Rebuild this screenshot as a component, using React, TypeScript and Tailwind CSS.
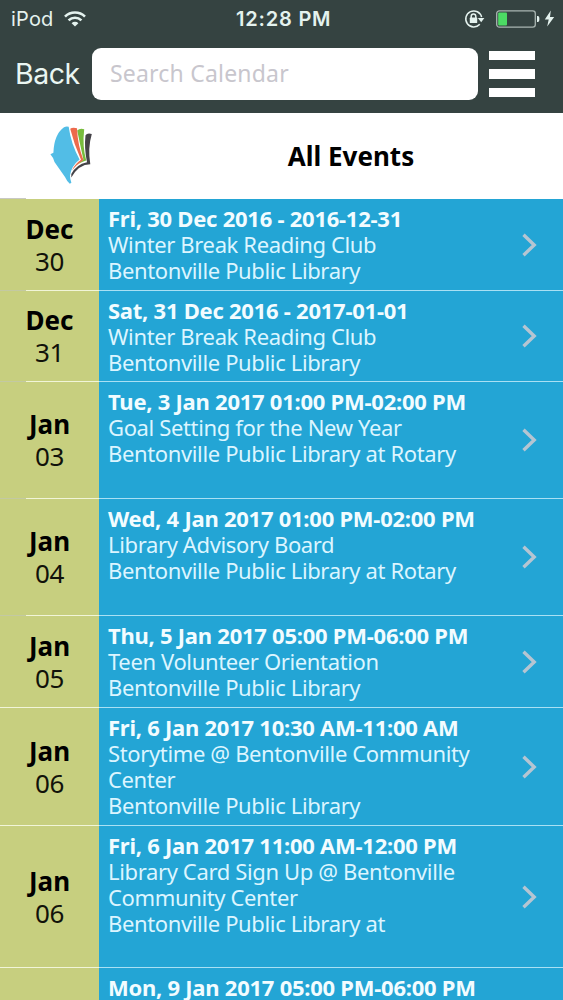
import React from 'react';

type Event = {
  month: string;
  day: string;
  when: string;
  lines: string[];
  height: string;
  inset?: boolean;
};

const events: Event[] = [
  { month: 'Dec', day: '30', when: 'Fri, 30 Dec 2016 - 2016-12-31', lines: ['Winter Break Reading Club', 'Bentonville Public Library'], height: 'h-[92px]', inset: true },
  { month: 'Dec', day: '31', when: 'Sat, 31 Dec 2016 - 2017-01-01', lines: ['Winter Break Reading Club', 'Bentonville Public Library'], height: 'h-[91px]', inset: true },
  { month: 'Jan', day: '03', when: 'Tue, 3 Jan 2017 01:00 PM-02:00 PM', lines: ['Goal Setting for the New Year', 'Bentonville Public Library at Rotary'], height: 'h-[117px]', inset: true },
  { month: 'Jan', day: '04', when: 'Wed, 4 Jan 2017 01:00 PM-02:00 PM', lines: ['Library Advisory Board', 'Bentonville Public Library at Rotary'], height: 'h-[117px]', inset: true },
  { month: 'Jan', day: '05', when: 'Thu, 5 Jan 2017 05:00 PM-06:00 PM', lines: ['Teen Volunteer Orientation', 'Bentonville Public Library'], height: 'h-[92px]' },
  { month: 'Jan', day: '06', when: 'Fri, 6 Jan 2017 10:30 AM-11:00 AM', lines: ['Storytime @ Bentonville Community', 'Center', 'Bentonville Public Library'], height: 'h-[118px]' },
  { month: 'Jan', day: '06', when: 'Fri, 6 Jan 2017 11:00 AM-12:00 PM', lines: ['Library Card Sign Up @ Bentonville', 'Community Center', 'Bentonville Public Library at'], height: 'h-[142px]' },
  { month: '', day: '', when: 'Mon, 9 Jan 2017 05:00 PM-06:00 PM', lines: [], height: 'h-[92px]' },
];

const StatusBar = () => (
  <div className="flex h-[37px] items-center font-['Inter'] text-[#e4f2ee]">
    <div className="flex w-[236px] items-center gap-[10px] pl-[11px]">
      <span className="text-[20px] leading-none tracking-[0.2px]">iPod</span>
      <svg width="22" height="16" viewBox="0 0 22 16" fill="none" stroke="currentColor" strokeWidth="2.6">
        <path d="M1 5.6a14.2 14.2 0 0 1 20 0" />
        <path d="M4.6 9.4a9 9 0 0 1 12.8 0" />
        <path d="M11 15.6L7.6 12.2a4.8 4.8 0 0 1 6.8 0z" fill="currentColor" stroke="none" />
      </svg>
    </div>
    <div className="whitespace-nowrap text-[20px] font-semibold leading-none tracking-[0.8px]">12:28 PM</div>
    <div className="flex flex-1 items-center justify-end pr-[8px]">
      <svg width="21" height="20" viewBox="0 0 21 20" fill="none" stroke="currentColor" strokeWidth="1.5">
        <path d="M15.8 15.2A8 8 0 1 1 17.6 8.2" />
        <path d="M13.8 9h6.6l-3.2 4.2z" fill="currentColor" stroke="none" />
        <path d="M7.2 9V7.4a2.3 2.3 0 0 1 4.6 0V9" />
        <rect x="5.8" y="8.6" width="7.4" height="5.4" rx=".6" fill="currentColor" stroke="none" />
      </svg>
      <svg className="ml-[11px]" width="44" height="18" viewBox="0 0 44 18">
        <rect x=".7" y=".9" width="38.6" height="16.2" rx="2.6" fill="none" stroke="#a9b5b1" strokeWidth="1.3" />
        <rect x="2.2" y="2.4" width="8.8" height="13.2" rx="1" fill="#4cdb64" />
        <path d="M41 6h.8q1.6 0 1.6 3t-1.6 3H41z" fill="currentColor" />
      </svg>
      <svg className="ml-[4px]" width="11" height="17" viewBox="0 0 11 17" fill="currentColor">
        <path d="M6.8.5L.8 9.4h3.9L3.2 16.5l7-9.6H6z" />
      </svg>
    </div>
  </div>
);

const Logo = () => (
  <svg width="42" height="60" viewBox="0 0 42 60">
    <path d="M35.5 9.2Q37.4 6.6 41.8 8Q37.6 22 40.3 38.3Q28.8 38.4 21.3 51.5V48Q26 38.5 37 36.2Q34 22 35.5 9.2z" fill="#454348" />
    <path d="M27.2 4.6Q29.6 2 34.2 3.2Q32.2 20 36.2 34.6Q29 36.6 24 41.6Q29.5 36.5 33.4 33.6Q30.4 20 27.2 4.6z" fill="#78bc3d" />
    <path d="M20.2 2.8Q22.4 1 27 2.2Q27.7 19 33.4 34Q26.6 38.5 22 44.2Q25 38 31 33.8Q23.9 18 20.2 2.8z" fill="#ed6a4c" />
    <path d="M14 1.2Q16.6 -.2 18.7 .8Q21 18 29.6 33.6Q21.4 40 20 49.5Q20 53 21.4 56.8L19.8 57.8Q17 55.4 15 51L4.5 36Q3.8 32 .4 28.2L3.4 26.8Q4 8.4 14 1.2z" fill="#52bde6" />
  </svg>
);

const EventRow = ({ event }: { event: Event }) => (
  <div className={`relative flex shrink-0 ${event.height}`}>
    <div className="flex w-[99px] flex-col items-center justify-center border-b border-[#f1f5d8] bg-[#c7cf7f] text-[26px] leading-[32px] text-[#11120a]">
      <div className="font-bold text-black">{event.month}</div>
      <div className="tracking-[-0.3px]">{event.day}</div>
    </div>
    <div className="flex flex-1 items-center border-b border-[#a9e0f4] bg-[#23a5d5] pl-[9px] pr-[26px]">
      <div className="flex-1 self-stretch whitespace-nowrap pt-[6px] text-[22px] leading-[26px] tracking-[-0.36px] text-[#dcf5ff]">
        <div className="font-bold tracking-[-0.25px] text-[#f2fcff]">{event.when}</div>
        {event.lines.map((line) => (
          <div key={line}>{line}</div>
        ))}
      </div>
      {event.month && (
        <svg width="16" height="24" viewBox="0 0 16 24" fill="none" stroke="#b5c5d2" strokeWidth="3.4">
          <path d="M2.5 1.8L13.2 12L2.5 22.2" />
        </svg>
      )}
    </div>
    {event.inset && <div className="absolute bottom-0 left-0 h-px w-[26px] bg-[#c3c9a2]" />}
  </div>
);

export default function App() {
  return (
    <div className="flex h-[1000px] w-[563px] flex-col overflow-hidden bg-white font-['Noto_Sans',sans-serif]">
      <header className="h-[113px] shrink-0 bg-[#354341]">
        <StatusBar />
        <div className="flex h-[74px] items-center pl-[15px]">
          <span className="w-[77px] font-['Inter'] text-[28.5px] leading-none tracking-[-0.5px] text-[#eaf6f2]">Back</span>
          <input
            className="h-[52px] w-[386px] rounded-[9px] bg-white px-[18px] pb-[3px] text-[23px] tracking-[0.2px] placeholder:text-[#c8c6cd]"
            placeholder="Search Calendar"
          />
          <div className="ml-[11px] flex w-[46px] flex-col gap-[9px]">
            <div className="h-[9.5px] bg-white" />
            <div className="h-[9.5px] bg-white" />
            <div className="h-[9.5px] bg-white" />
          </div>
        </div>
      </header>
      <div className="relative flex h-[86px] shrink-0 items-center">
        <div className="w-[139px] pl-[50px]">
          <Logo />
        </div>
        <h1 className="flex-1 text-center text-[26px] font-bold text-black">All Events</h1>
        <div className="absolute bottom-0 left-0 h-px w-[26px] bg-[#c8c8c4]" />
      </div>
      {events.map((event, i) => (
        <EventRow key={i} event={event} />
      ))}
    </div>
  );
}
